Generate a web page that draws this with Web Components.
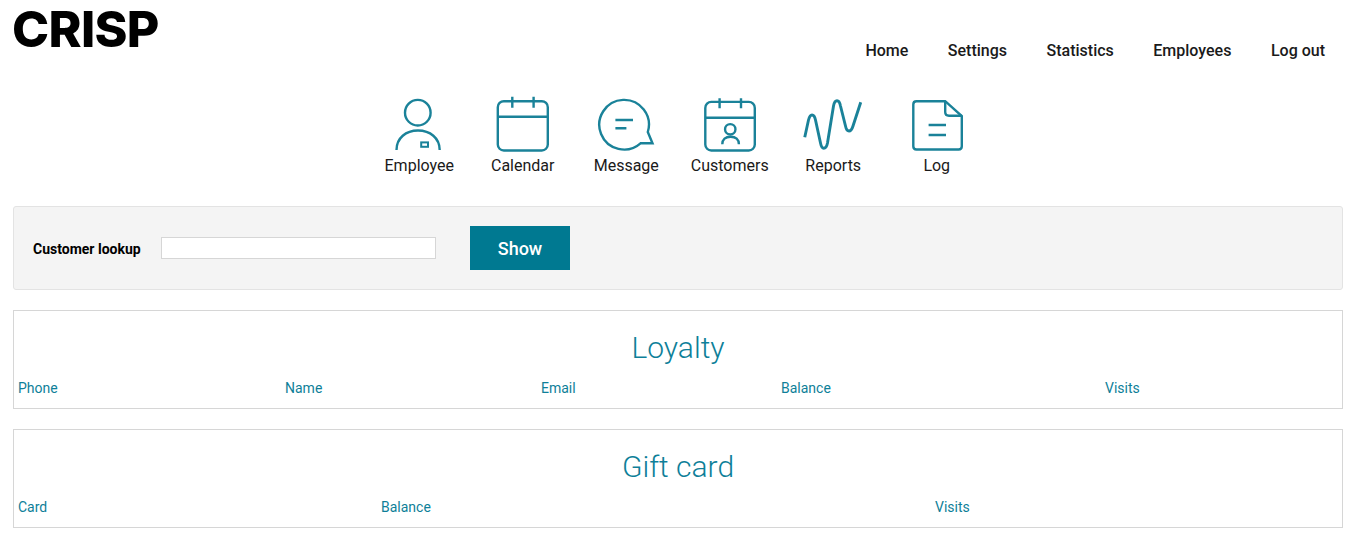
<!DOCTYPE html>
<html>
<head>
<meta charset="utf-8">
<title>Crisp</title>
<style>
  html, body { margin: 0; background: #fff; }
  body { font-family: Roboto, "Liberation Sans", sans-serif; padding: 0 12px 0 13px; }
  crisp-card { margin-top: 20px; }
</style>
</head>
<body>
<crisp-header>
  <a href="#">Home</a>
  <a href="#">Settings</a>
  <a href="#">Statistics</a>
  <a href="#">Employees</a>
  <a href="#">Log out</a>
</crisp-header>
<crisp-menu>
  <crisp-tile label="Employee" icon="employee"></crisp-tile>
  <crisp-tile label="Calendar" icon="calendar"></crisp-tile>
  <crisp-tile label="Message" icon="message"></crisp-tile>
  <crisp-tile label="Customers" icon="customers"></crisp-tile>
  <crisp-tile label="Reports" icon="reports"></crisp-tile>
  <crisp-tile label="Log" icon="log"></crisp-tile>
</crisp-menu>
<crisp-lookup></crisp-lookup>
<crisp-card title="Loyalty" columns="267px 256px 240px 324px 1fr" labels="Phone,Name,Email,Balance,Visits"></crisp-card>
<crisp-card title="Gift card" columns="363px 554px 1fr" labels="Card,Balance,Visits"></crisp-card>

<script>
(function() {
  const ICONS = {
    employee: `<circle cx="28.800" cy="17.700" r="12.800"/>
      <path d="M7.500 55C7.500 43 17 35.500 29 35.500S50.700 43 50.700 55"/>
      <rect x="32.200" y="47.400" width="6.800" height="4.400" stroke-width="2"/>`,
    calendar: `<rect x="4.800" y="6.200" width="50" height="49.300" rx="6"/>
      <path d="M4.800 21.700h50M19.300 1.700v11M40.600 1.700v11"/>`,
    message: `<path d="M51.800 37 56.500 48.300H44.500A24.800 24.800 0 1 1 51.800 37z"/>
      <path d="M19.400 25H37M19.400 33.300H30.400"/>`,
    customers: `<rect x="5.300" y="6.900" width="49.500" height="48.600" rx="6"/>
      <path d="M5.300 22.700h49.500M19.600 3.300v10M41 3.300v10"/>
      <circle cx="30.250" cy="34.300" r="5.200"/>
      <path d="M22.300 49.300C22.300 44.500 25.500 41.700 30.600 41.700S38.900 44.500 38.900 49.300"/>`,
    reports: `<path stroke-width="2.900" d="M1.750 42.300 5.500 25Q6.800 20 9 20 11.500 20 12.500 25L17.500 48Q18.500 53.300 20.750 53.300 23.500 53.300 24.500 48L30.500 11Q31.500 5.700 34 5.700 36.500 5.700 37.500 11L42.500 31Q43.500 36 46 36 48.500 36 50 31L57.750 7.300"/>`,
    log: `<path d="M38.200 6.200H9.500Q6.300 6.200 6.300 9.400V51.300Q6.300 54.500 9.500 54.500H51.600Q54.800 54.500 54.800 51.300V21z"/>
      <path d="M38.200 6.200V17Q38.200 20.700 42 20.700H54.800M21.600 30H39M21.600 40H39"/>`
  };

  class CrispHeader extends HTMLElement {
    constructor() {
      super();
      this.attachShadow({mode: 'open'}).innerHTML =
        `<style>
          :host {
            align-items: flex-start;
            display: flex;
            height: 83px;
            justify-content: space-between;
          }
          .logo {
            color: #000;
            font: 800 50px/58px Inter, "Liberation Sans", sans-serif;
            letter-spacing: -.7px;
            margin-left: -1px;
          }
          nav {
            display: flex;
            font-size: 16px;
            font-weight: 500;
            gap: 39.5px;
            margin-top: 42px;
            padding-right: 18px;
          }
          ::slotted(a) {
            color: #1a1a1a;
            line-height: 18px;
            text-decoration: none;
          }
        </style>
        <div class="logo">CRISP</div>
        <nav><slot></slot></nav>`;
    }
  }

  class CrispMenu extends HTMLElement {
    constructor() {
      super();
      this.attachShadow({mode: 'open'}).innerHTML =
        `<style>
          :host {
            display: flex;
            height: 111px;
            justify-content: center;
            margin-top: 12px;
          }
        </style>
        <slot></slot>`;
    }
  }

  class CrispTile extends HTMLElement {
    connectedCallback() {
      const icon = ICONS[this.getAttribute('icon')];
      this.attachShadow({mode: 'open'}).innerHTML =
        `<style>
          :host {
            align-items: center;
            color: #1a1a1a;
            display: flex;
            flex-direction: column;
            font-size: 16px;
            width: 103.5px;
          }
          svg {
            display: block;
            fill: none;
            height: 60px;
            stroke: #1a8299;
            stroke-width: 2.4;
            width: 60px;
          }
          span { line-height: 20px; margin-top: 1px; }
        </style>
        <svg viewBox="0 0 60 60">${icon}</svg>
        <span>${this.getAttribute('label')}</span>`;
    }
  }

  class CrispLookup extends HTMLElement {
    constructor() {
      super();
      this.attachShadow({mode: 'open'}).innerHTML =
        `<style>
          :host {
            align-items: center;
            background: #f4f4f4;
            border: 1px solid #e3e3e3;
            border-radius: 3px;
            box-sizing: border-box;
            display: flex;
            height: 84px;
            padding-left: 19px;
          }
          label {
            color: #000;
            font-size: 14px;
            font-weight: 700;
            margin-top: 2px;
            width: 128px;
          }
          input {
            background: #fff;
            border: 1px solid #d6d6d6;
            box-sizing: border-box;
            height: 22px;
            margin: 0;
            padding: 0;
            width: 275px;
          }
          button {
            background: #007991;
            border: 0;
            color: #fff;
            font: 500 18px Roboto, sans-serif;
            height: 44px;
            margin-left: 34px;
            padding: 0;
            width: 100px;
          }
        </style>
        <label>Customer lookup</label>
        <input type="text">
        <button>Show</button>`;
    }
  }

  class CrispCard extends HTMLElement {
    connectedCallback() {
      const cells = this.getAttribute('labels').split(',')
        .map(label => `<span>${label}</span>`).join('');
      this.attachShadow({mode: 'open'}).innerHTML =
        `<style>
          :host {
            border: 1px solid #d6d6d6;
            box-sizing: border-box;
            color: #0e7f99;
            display: block;
            height: 99px;
            padding: 19px 4px 0;
          }
          h2 {
            font-size: 30px;
            font-weight: 300;
            line-height: 36px;
            margin: 0 0 12px;
            text-align: center;
          }
          .row {
            display: grid;
            font-size: 14px;
            grid-template-columns: ${this.getAttribute('columns')};
            line-height: 20px;
          }
        </style>
        <h2>${this.getAttribute('title')}</h2>
        <div class="row">${cells}</div>`;
    }
  }

  customElements.define('crisp-header', CrispHeader);
  customElements.define('crisp-menu', CrispMenu);
  customElements.define('crisp-tile', CrispTile);
  customElements.define('crisp-lookup', CrispLookup);
  customElements.define('crisp-card', CrispCard);
}());
</script>
</body>
</html>
